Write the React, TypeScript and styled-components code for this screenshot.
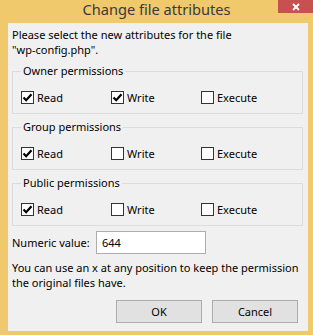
import React from "react";
import styled, { createGlobalStyle } from "styled-components";

const Global = createGlobalStyle`
  html, body { margin: 0; padding: 0; background: #f0c96c; }
  * { box-sizing: border-box; }
`;

const Frame = styled.div`
  width: 313px;
  height: 335px;
  background: #f0c96c;
  display: flex;
  flex-direction: column;
  padding: 0 5px 4px 8px;
  font-family: "Noto Sans", "Open Sans", sans-serif;
  font-size: 11px;
  color: #000;
`;

const TitleBar = styled.div`
  height: 23px;
  margin: 0 -5px 0 -8px;
  display: grid;
  grid-template-columns: 1fr auto 1fr;
  align-items: start;
`;

const Title = styled.div`
  grid-column: 2;
  font-size: 14.6px;
  line-height: 18px;
  color: #3a3a3a;
`;

const Close = styled.div`
  grid-column: 3;
  justify-self: end;
  width: 35px;
  height: 13px;
  background: #c75050;
  display: flex;
  align-items: center;
  justify-content: center;
`;

const Content = styled.div`
  flex: 1;
  background: #f0f0f0;
  display: flex;
  flex-direction: column;
  padding: 4px 5px 8px 4px;
`;

const Para = styled.div<{ $mt?: number }>`
  line-height: 15px;
  margin-top: ${(p) => p.$mt ?? 0}px;
`;

const Group = styled.fieldset`
  margin: 7px 0 0 0;
  border: 1px solid #dcdcdc;
  padding: 12px 6px 8px 8px;
  & + & {
    margin-top: 6px;
  }
`;

const Legend = styled.legend`
  padding: 0 2px;
  line-height: 14px;
`;

const Row = styled.div`
  display: grid;
  grid-template-columns: 90px 90px 90px;
  height: 15px;
  align-items: center;
`;

const CheckItem = styled.label`
  display: flex;
  align-items: center;
  gap: 3px;
`;

const Box = styled.span`
  width: 13px;
  height: 13px;
  border: 1px solid #333;
  background: #fff;
  display: flex;
  align-items: center;
  justify-content: center;
`;

const NumRow = styled.div`
  display: flex;
  align-items: center;
  margin-top: 5px;
`;

const NumLabel = styled.span`
  width: 84px;
`;

const Input = styled.div`
  width: 110px;
  height: 23px;
  border: 1px solid #abadb3;
  background: #fff;
  padding-left: 5px;
  display: flex;
  align-items: center;
`;

const Buttons = styled.div`
  display: flex;
  justify-content: flex-end;
  gap: 10px;
  margin-top: auto;
  margin-right: 5px;
`;

const Button = styled.div`
  width: 86px;
  height: 23px;
  background: #e1e1e1;
  border: 1px solid #adadad;
  display: flex;
  align-items: center;
  justify-content: center;
`;

const Check = ({ on, label }: { on: boolean; label: string }) => (
  <CheckItem>
    <Box>
      {on && (
        <svg width="11" height="11" viewBox="0 0 11 11">
          <path d="M1.5 5.5 L4.2 8.2 L9.5 2.2" stroke="#000" strokeWidth="2.2" fill="none" />
        </svg>
      )}
    </Box>
    {label}
  </CheckItem>
);

const groups: { name: string; v: [boolean, boolean, boolean] }[] = [
  { name: "Owner permissions", v: [true, true, false] },
  { name: "Group permissions", v: [true, false, false] },
  { name: "Public permissions", v: [true, false, false] },
];

export default function App() {
  return (
    <Frame>
      <Global />
      <TitleBar>
        <Title>Change file attributes</Title>
        <Close>
          <svg width="8" height="8" viewBox="0 0 8 8">
            <path d="M1 1 L7 7 M7 1 L1 7" stroke="#fff" strokeWidth="1.8" />
          </svg>
        </Close>
      </TitleBar>
      <Content>
        <Para>
          Please select the new attributes for the file
          <br />"wp-config.php".
        </Para>
        {groups.map((g) => (
          <Group key={g.name}>
            <Legend>{g.name}</Legend>
            <Row>
              <Check on={g.v[0]} label="Read" />
              <Check on={g.v[1]} label="Write" />
              <Check on={g.v[2]} label="Execute" />
            </Row>
          </Group>
        ))}
        <NumRow>
          <NumLabel>Numeric value:</NumLabel>
          <Input>644</Input>
        </NumRow>
        <Para $mt={6}>
          You can use an x at any position to keep the permission
          <br />
          the original files have.
        </Para>
        <Buttons>
          <Button>OK</Button>
          <Button>Cancel</Button>
        </Buttons>
      </Content>
    </Frame>
  );
}
